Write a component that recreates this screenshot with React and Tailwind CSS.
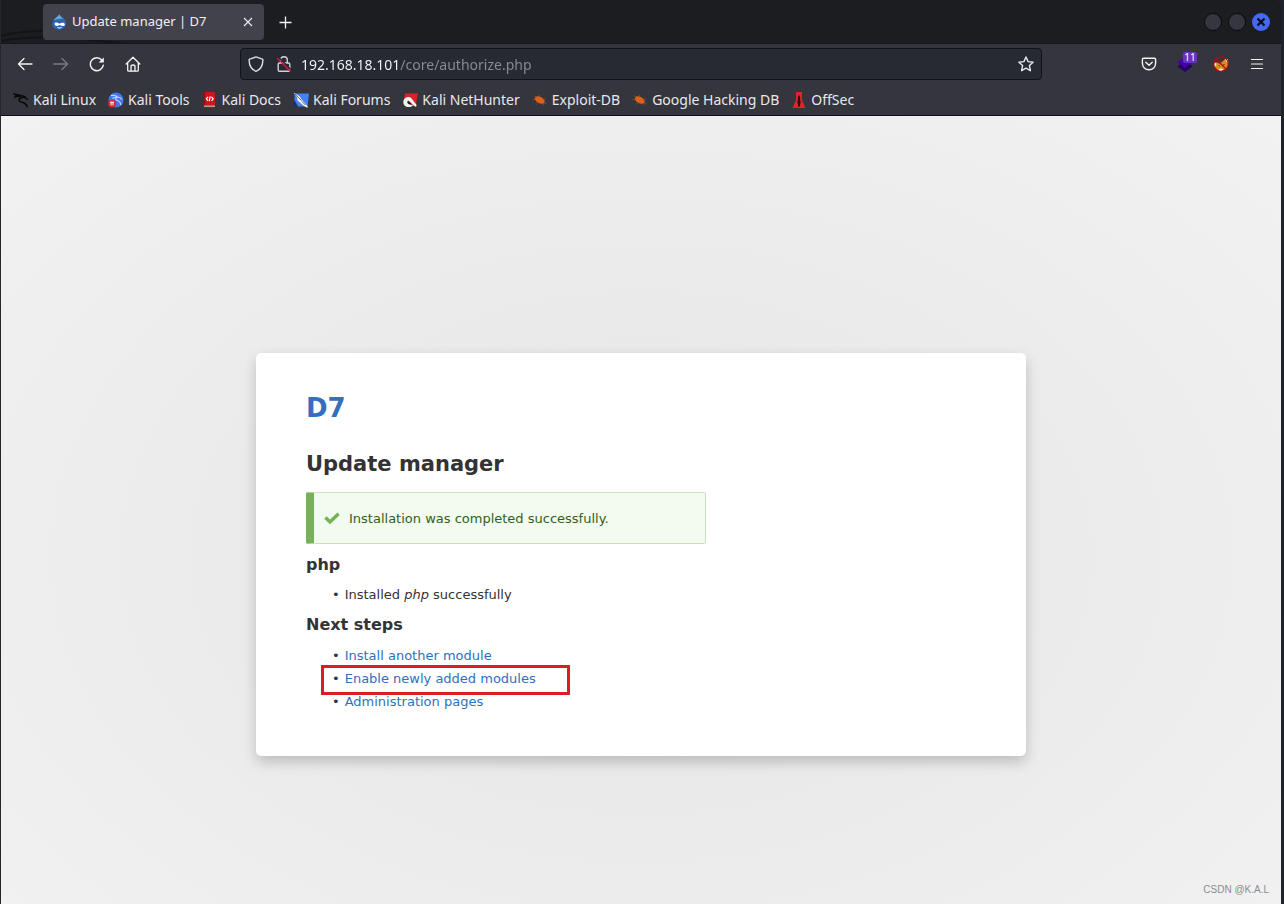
import React from 'react';

const bookmarks = [
  { label: 'Kali Linux', icon: KaliIcon },
  { label: 'Kali Tools', icon: ToolsIcon },
  { label: 'Kali Docs', icon: DocsIcon },
  { label: 'Kali Forums', icon: ForumsIcon },
  { label: 'Kali NetHunter', icon: NetHunterIcon },
  { label: 'Exploit-DB', icon: BugIcon },
  { label: 'Google Hacking DB', icon: BugIcon },
  { label: 'OffSec', icon: OffSecIcon },
];

const nextSteps = [
  { label: 'Install another module' },
  { label: 'Enable newly added modules', highlighted: true },
  { label: 'Administration pages' },
];

/* ── Icons ── */

function KaliIcon() {
  return (
    <svg viewBox="0 0 16 16" className="size-4" fill="none" stroke="#08080a" strokeWidth="1.4">
      <path d="M0.3 1.6 C3 3 4.5 2.2 7 3.4 C9 4.4 11 3.6 12.6 5.2 M1 5.4 C4 3.8 7 4.2 8 6 C5.2 7 5.6 9.6 8 10 C11 10.4 13.4 11.2 14.6 15.2 M8 6 C10 5 12.4 5 14.8 7.8 M2 3 L6 4.5" />
      <path d="M8.5 10 C10.5 10.6 11.6 11.6 12.4 13.4" strokeWidth="0.8" />
    </svg>
  );
}

function ToolsIcon() {
  return (
    <svg viewBox="0 0 16 16" className="size-4">
      <circle cx="8" cy="8" r="7.5" fill="#4078ef" />
      <path d="M3 3.5 Q8 3 9.5 5 Q7 6 8 8 Q12 8.5 13 13 M4.5 6.5 Q6 5 9.5 5 Q12 5 14 7.5" fill="none" stroke="#c5d7ff" strokeWidth="1.2" />
      <circle cx="4" cy="11.5" r="4" fill="#d8252e" />
      <path d="M2 10.2 H6 M3.1 10.2 V13.4 M5 10.2 V13.4" fill="none" stroke="#fff" strokeWidth="1" />
    </svg>
  );
}

function DocsIcon() {
  return (
    <svg viewBox="0 0 16 16" className="size-4">
      <path d="M1.5 0 H13 V13.6 H1.5 Z" fill="#c9151b" />
      <path d="M1.5 0 H3.2 V13.6 H1.5 Z" fill="#8c0d14" />
      <path d="M2 13.6 H13 V14.8 H2 Z" fill="#d6d6d6" />
      <path d="M1.5 14.8 H13 V16 H1.5 Z" fill="#a31118" />
      <path d="M6 4.8 L4.3 6.8 L6 8.8 M8.3 4.4 L7.2 9.2 M9.5 4.8 L11.2 6.8 L9.5 8.8" fill="none" stroke="#fff" strokeWidth="1.2" />
    </svg>
  );
}

function ForumsIcon() {
  return (
    <svg viewBox="0 0 16 16" className="size-4">
      <path d="M1.5 1.5 H16 L14.6 14.5 H5 L1.5 8 Z" fill="#4580f5" />
      <path d="M0.5 0.5 L6.5 4.2 L9 8 L14 13.5 L15 16 L11 14 L7.5 11 L4.5 8.5 L4 5.2 Z" fill="#f4f4f4" />
      <path d="M2 2.2 L8.5 8.5 M9 9.5 L12.5 13" fill="none" stroke="#24262c" strokeWidth="0.7" />
      <path d="M0.5 8.5 L4 14.2 L0.5 14.8 Z" fill="#1a2f66" />
    </svg>
  );
}

function NetHunterIcon() {
  return (
    <svg viewBox="0 0 16 16" className="size-4">
      <path d="M3 1.5 H16 L13.5 14.5 L8 12 L2 7 Z" fill="#d8232c" />
      <path d="M1.6 8.5 C2.6 4.6 7 3.9 9.4 6.2 L14.6 13 L14 15 C10 12.4 8.5 10.2 7.3 9.2 C5.5 8 4.4 10 5.8 11.5 C7.3 13 9.6 12.3 11 13.2 C8.8 16 3.6 15.6 1.9 12.4 C1.2 11 1.2 9.8 1.6 8.5 Z" fill="#f2f2f2" />
      <path d="M6.2 8.9 L10.2 12.6 L7.5 12.3 L5.8 10.9 Z" fill="#1b1c21" />
    </svg>
  );
}

function BugIcon() {
  return (
    <svg viewBox="0 0 16 16" className="size-4">
      <ellipse cx="7.8" cy="8" rx="5.3" ry="3.2" transform="rotate(28 7.8 8)" fill="#df6019" />
      <path d="M4 5.5 L2 3.5 M7 5 L7.5 2.8 M11 7.5 L13.5 6.5 M3 7.5 H0.8 M6 10.5 L4.5 12.5 M10.5 11.5 L12 13.5 M12 10.5 L14.7 12" stroke="#97491f" strokeWidth="0.9" />
    </svg>
  );
}

function OffSecIcon() {
  return (
    <svg viewBox="0 0 16 16" className="size-4">
      <path d="M5 0 H11 V8 L14.5 16 H1.5 L5 8 Z" fill="#d9262d" />
      <path d="M8 3 L9.3 5.2 L8.9 7 L9.7 10 L9 12.5 V14.5 H7 V12.5 L6.3 10 L7.1 7 L6.7 5.2 Z" fill="#320a10" />
    </svg>
  );
}

function DrupalIcon() {
  return (
    <svg viewBox="0 0 16 16" className="size-4 shrink-0">
      <path d="M8.2 0.2 C9.7 2.8 15 4.4 15 9.4 C15 13.2 11.8 15.7 8.2 15.7 C4.4 15.7 1.2 13.2 1.2 9.4 C1.2 5.4 6.4 3.6 8.2 0.2 Z" fill="#2a66b0" />
      <path d="M8.2 0.2 C9.3 2.4 11.2 3.4 12.8 5.2 C9.6 4 6 5.6 2.4 6 C4 4 7.2 2.8 8.2 0.2 Z" fill="#68a4dc" />
      <path d="M3.6 10 C3.6 8.2 6 8.2 8.4 9.7 C10.6 8.2 13.8 8.2 13.8 10.4 C13.8 12.6 10.8 12.4 8.7 11.1 C6.8 12.4 3.6 12.3 3.6 10 Z" fill="#fff" />
      <path d="M6.6 13.4 Q8.4 14.8 10.6 13.4" fill="none" stroke="#fff" strokeWidth="1" />
    </svg>
  );
}

function BackIcon() {
  return (
    <svg viewBox="0 0 16 16" className="size-4" fill="none" stroke="currentColor" strokeWidth="1.3" strokeLinecap="round" strokeLinejoin="round">
      <path d="M15 8 H1.5 M7 2.5 L1.5 8 L7 13.5" />
    </svg>
  );
}

function ForwardIcon() {
  return (
    <svg viewBox="0 0 16 16" className="size-4" fill="none" stroke="currentColor" strokeWidth="1.3" strokeLinecap="round" strokeLinejoin="round">
      <path d="M1 8 H14.5 M9 2.5 L14.5 8 L9 13.5" />
    </svg>
  );
}

function ReloadIcon() {
  return (
    <svg viewBox="0 0 16 16" className="size-4" fill="none" stroke="currentColor" strokeWidth="1.4" strokeLinecap="round">
      <path d="M14.3 9.2 A6.5 6.5 0 1 1 12.8 4" />
      <path d="M14.8 1.4 V6.6 H9.6 Z" fill="currentColor" stroke="none" />
    </svg>
  );
}

function HomeIcon() {
  return (
    <svg viewBox="0 0 16 16" className="size-4" fill="none" stroke="currentColor" strokeWidth="1.3" strokeLinecap="round" strokeLinejoin="round">
      <path d="M1.2 8 L8 1.3 L14.8 8 M2.7 6.8 V14.2 Q2.7 15.2 3.7 15.2 H12.3 Q13.3 15.2 13.3 14.2 V6.8" />
      <path d="M6 15 V10.6 Q6 9 8 9 Q10 9 10 10.6 V15" />
    </svg>
  );
}

function ShieldIcon() {
  return (
    <svg viewBox="0 0 16 16" className="size-4" fill="none" stroke="#dcdce2" strokeWidth="1.4" strokeLinejoin="round">
      <path d="M8 0.9 L14.3 3.2 Q15 3.5 14.9 4.4 C14.7 9.5 12.5 13.6 8 15.3 C3.5 13.6 1.3 9.5 1.1 4.4 Q1 3.5 1.7 3.2 Z" />
    </svg>
  );
}

function InsecureLockIcon() {
  return (
    <svg viewBox="0 0 16 16" className="size-4" fill="none" strokeWidth="1.4" strokeLinejoin="round">
      <path d="M4.7 7 V4.2 C4.7 -0.4 11.3 -0.4 11.3 4.2 V7 M3.4 7 H12.6 Q13.8 7 13.8 8.2 V14 Q13.8 15.2 12.6 15.2 H3.4 Q2.2 15.2 2.2 14 V8.2 Q2.2 7 3.4 7 Z" stroke="#d2d2d8" />
      <path d="M2.6 1.2 L15.4 14.2" stroke="#282a33" strokeWidth="1.6" />
      <path d="M1.2 2 L14.2 15.2" stroke="#dc1745" />
    </svg>
  );
}

function StarIcon() {
  return (
    <svg viewBox="0 0 16 16" className="size-4" fill="none" stroke="#e6e6eb" strokeWidth="1.4" strokeLinejoin="round">
      <path d="M8 1 L10.1 5.6 L15.1 6.2 L11.4 9.6 L12.4 14.7 L8 12.2 L3.6 14.7 L4.6 9.6 L0.9 6.2 L5.9 5.6 Z" />
    </svg>
  );
}

function PocketIcon() {
  return (
    <svg viewBox="0 0 16 16" className="size-4" fill="none" stroke="currentColor" strokeWidth="1.4" strokeLinecap="round" strokeLinejoin="round">
      <path d="M2.6 2.2 H13.4 Q14.6 2.2 14.6 3.4 V7.2 C14.6 11 11.6 13.8 8 13.8 C4.4 13.8 1.4 11 1.4 7.2 V3.4 Q1.4 2.2 2.6 2.2 Z" />
      <path d="M4.8 6.3 L8 9.3 L11.2 6.3" />
    </svg>
  );
}

function LayersIcon() {
  return (
    <svg viewBox="0 0 16 16" className="size-4">
      <path d="M0.2 10.2 L8 5 L15.8 10.2 L8 16 Z" fill="#25006a" />
      <path d="M0.2 6.2 L8 0.5 L15.8 6.2 L8 11.8 Z" fill="#4500a8" />
    </svg>
  );
}

function FoxIcon() {
  return (
    <svg viewBox="0 0 16 16" className="size-4">
      <path d="M1.2 8.5 L3.4 6.2 L6 7.4 L9 6 L11.6 3.4 L14.8 3.6 L15 9 L12.8 13 L8.6 15 L4.6 14.2 L2.4 11.6 Z" fill="#dd8a1e" />
      <path d="M12 3.2 L14.8 3 L15.4 7 L13.2 5.6 Z M1 7.6 L3 6.4 L3.4 9.2 L1.4 11 Z M5.6 13.2 L8 12.6 L10.4 13.2 L8.4 15.2 L6 14.8 Z" fill="#efe8dd" />
      <path d="M5.4 9.6 L6.8 9.2 L6.6 10.8 Z M10 8.4 L11.8 8 L10.8 9.8 Z" fill="#3d2312" />
      <circle cx="8" cy="8" r="7.3" fill="none" stroke="#b9090d" strokeWidth="1.1" />
      <path d="M3 3 L13 13" stroke="#b9090d" strokeWidth="1.2" />
    </svg>
  );
}

function MenuIcon() {
  return (
    <svg viewBox="0 0 16 16" className="size-4" stroke="currentColor" strokeWidth="1.2" strokeLinecap="round">
      <path d="M2.5 3.5 H13.5 M2.5 8 H13.5 M2.5 12.5 H13.5" />
    </svg>
  );
}

function CheckIcon() {
  return (
    <svg viewBox="0 0 16 16" className="size-4" fill="none" stroke="#73b355" strokeWidth="3.4">
      <path d="M1.4 7.6 L6 12 L14.6 3.8" />
    </svg>
  );
}

function ToolbarButton({ label, children, disabled }) {
  return (
    <button
      type="button"
      aria-label={label}
      disabled={disabled}
      className="relative flex h-8 w-9 items-center justify-center text-[#f4f4f8] disabled:text-[#7b7b83]"
    >
      {children}
    </button>
  );
}

/* ── Browser chrome ── */

function TitleBar() {
  return (
    <div className="relative flex h-11 items-center border-b border-[#15161a] bg-[#1c1d21] pr-[11px] pl-[42px]">
      {/* faint theme artwork behind the tabs */}
      <svg viewBox="0 0 130 43" className="pointer-events-none absolute top-0 left-0 h-[43px] w-[130px]" fill="none" stroke="#131418" strokeWidth="2">
        <path d="M0 36 Q20 31 42 31 M0 41 Q40 34 90 40 T130 43" />
      </svg>
      <div className="relative flex h-9 w-[221px] items-center rounded bg-[#42424c] px-2 text-[#f0f0f4]">
        <DrupalIcon />
        <span className="ml-[5px] flex-1 text-[13px] whitespace-nowrap">Update manager | D7</span>
        <button type="button" aria-label="Close tab" className="flex size-4 items-center justify-center">
          <svg viewBox="0 0 16 16" className="size-4" stroke="currentColor" strokeWidth="1.1">
            <path d="M4 4 L12 12 M12 4 L4 12" />
          </svg>
        </button>
      </div>
      <button type="button" aria-label="New tab" className="ml-[13px] flex size-4 items-center justify-center text-[#f4f4f8]">
        <svg viewBox="0 0 16 16" className="size-4" stroke="currentColor" strokeWidth="1.3">
          <path d="M8.5 2.5 V14.5 M2.5 8.5 H14.5" />
        </svg>
      </button>
      <div className="ml-auto flex gap-1.5">
        <button type="button" aria-label="Minimize" className="size-[18px] rounded-full border border-[#0a0a0c] bg-[#35363f]" />
        <button type="button" aria-label="Maximize" className="size-[18px] rounded-full border border-[#0a0a0c] bg-[#35363f]" />
        <button type="button" aria-label="Close" className="flex size-[18px] items-center justify-center rounded-full bg-[#4568f0]">
          <svg viewBox="0 0 16 16" className="size-4" stroke="#0b0d14" strokeWidth="2.2">
            <path d="M4.5 4.5 L11.5 11.5 M11.5 4.5 L4.5 11.5" />
          </svg>
        </button>
      </div>
    </div>
  );
}

function NavBar() {
  return (
    <nav className="flex h-10 items-center bg-[#35353d] px-1.5">
      <ToolbarButton label="Back"><BackIcon /></ToolbarButton>
      <ToolbarButton label="Forward" disabled><ForwardIcon /></ToolbarButton>
      <ToolbarButton label="Reload"><ReloadIcon /></ToolbarButton>
      <ToolbarButton label="Home"><HomeIcon /></ToolbarButton>

      <div className="mx-[89px] flex h-8 flex-1 items-center rounded border border-[#121318] bg-[#282a33] px-[7px]">
        <ShieldIcon />
        <span className="ml-3"><InsecureLockIcon /></span>
        {/* host is bright, path is dimmed */}
        <input
          type="text"
          aria-label="Address"
          defaultValue="192.168.18.101/core/authorize.php"
          className="ml-[9px] min-w-0 flex-1 bg-[linear-gradient(90deg,#fbfbfe_99px,#8b8b94_99px)] bg-clip-text text-[14px] text-transparent outline-none"
        />
        <button type="button" aria-label="Bookmark this page"><StarIcon /></button>
      </div>

      <ToolbarButton label="Save to Pocket"><PocketIcon /></ToolbarButton>
      <ToolbarButton label="Layers">
        <LayersIcon />
        <span className="absolute top-1 left-4 h-[11px] w-3.5 rounded-xs bg-[#6a33bd] text-center text-[10px] leading-[11px] text-white">11</span>
      </ToolbarButton>
      <ToolbarButton label="FoxyProxy"><FoxIcon /></ToolbarButton>
      <ToolbarButton label="Menu"><MenuIcon /></ToolbarButton>
    </nav>
  );
}

function BookmarksBar() {
  return (
    <div className="flex h-8 items-center gap-3 border-b border-[#101014] bg-[#35353d] px-3 text-[14px] text-[#e8e8ec]">
      {bookmarks.map(({ label, icon: Icon }) => (
        <a key={label} href="#" className="flex items-center gap-1 whitespace-nowrap">
          <Icon />
          {label}
        </a>
      ))}
    </div>
  );
}

/* ── Page ── */

function BulletItem({ children }) {
  return <li className="relative before:mr-[5px] before:content-['•']">{children}</li>;
}

function UpdateManager() {
  return (
    <div className="w-[770px] max-w-full rounded-[5px] bg-white px-[50px] pt-10 pb-11 text-[13px] leading-5 text-[#333] shadow-[0_6px_14px_rgba(0,0,0,0.2)]">
      <h1 className="text-[26px] leading-[30px] font-bold">
        <a href="#" className="text-[#3570bd]">D7</a>
      </h1>
      <h2 className="mt-7 text-[21px] leading-[26px] font-bold">Update manager</h2>

      <div role="status" className="mt-[15px] flex h-[52px] w-[400px] items-center rounded-xs border border-l-8 border-[#c9e1bd] border-l-[#77b259] bg-[#f3faef] pl-2.5 text-[#325e1c]">
        <CheckIcon />
        <p className="ml-[9px] pt-0.5">Installation was completed successfully.</p>
      </div>

      <h3 className="mt-[11px] text-[16px] leading-5 font-bold">php</h3>
      <ul className="mt-2.5 pl-[26px]">
        <BulletItem>Installed <em>php</em> successfully</BulletItem>
      </ul>

      <h3 className="mt-2.5 text-[16px] leading-5 font-bold">Next steps</h3>
      <ul className="mt-[11px] space-y-[3px] pl-[26px]">
        {nextSteps.map((step) => (
          <BulletItem key={step.label}>
            <a href="#" className="text-[#2e70c0]">{step.label}</a>
            {step.highlighted && (
              <span className="pointer-events-none absolute -top-1 -left-[11px] h-[30px] w-[249px] border-3 border-[#d91c28]" />
            )}
          </BulletItem>
        ))}
      </ul>
    </div>
  );
}

export default function App() {
  return (
    <div className="h-screen overflow-hidden bg-[#20222b] pr-[3px] font-['Noto_Sans',sans-serif]">
      <div className="flex h-full flex-col overflow-hidden rounded-tr-md border-l border-[#26272e] bg-[#1c1d21]">
        <header className="shrink-0">
          <TitleBar />
          <NavBar />
          <BookmarksBar />
        </header>
        <main className="relative flex flex-1 items-start justify-center bg-[radial-gradient(905px_620px_at_50%_438px,#e5e5e5,#f2f2f2)] pt-[237px] font-['DejaVu_Sans',sans-serif]">
          <UpdateManager />
          <span className="absolute right-3 bottom-2 font-['Liberation_Sans',sans-serif] text-[10px] leading-3 text-[#8d8d8d]">CSDN @K.A.L</span>
        </main>
      </div>
    </div>
  );
}
